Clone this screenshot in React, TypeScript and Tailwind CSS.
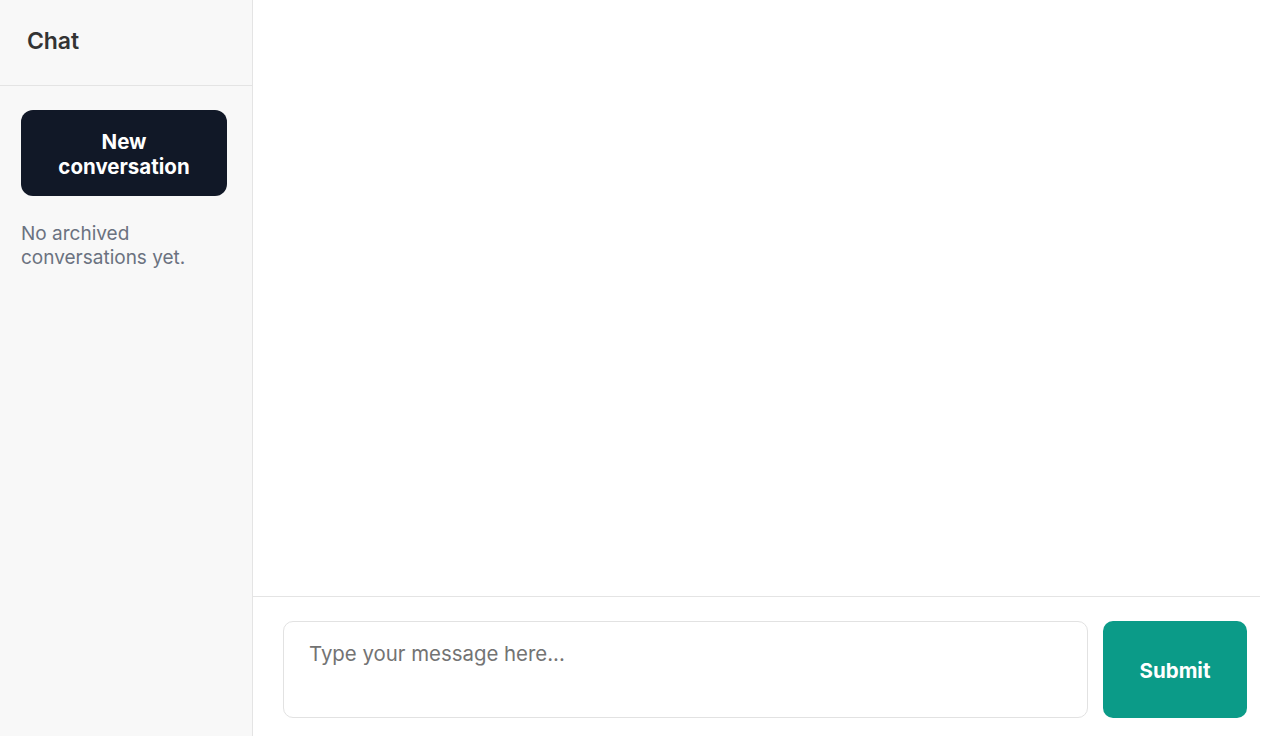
import { useState } from "react";

export default function App() {
  const [message, setMessage] = useState("");

  return (
    <div
      className="flex h-screen w-full bg-white text-[#333]"
      style={{ fontFamily: "Inter, 'Noto Sans', sans-serif" }}
    >
      {/* Sidebar */}
      <aside className="flex w-[253px] shrink-0 flex-col border-r border-[#e4e4e4] bg-[#f8f8f8]">
        <div className="flex h-[86px] items-center border-b border-[#e4e4e4] pb-[2px] px-[27px]">
          <h1 className="text-[23px] font-semibold tracking-[-0.1px] text-[#333]">Chat</h1>
        </div>
        <div className="flex flex-col px-[21px] pt-[24px]">
          <button
            type="button"
            className="flex h-[86px] w-[206px] items-center justify-center rounded-[12px] bg-[#111827] pt-[2px] text-center text-[20.5px] font-bold leading-[25px] text-white"
          >
            New
            <br />
            conversation
          </button>
          <p className="mt-[26px] text-[19px] leading-[24px] text-[#6b7280]">
            No archived conversations yet.
          </p>
        </div>
      </aside>

      {/* Main */}
      <main className="flex min-w-0 flex-1 flex-col pr-[2px]">
        <div className="flex-1" />
        <div className="flex gap-[15px] border-t border-[#e4e4e4] pb-[18px] pl-[30px] pr-[13px] pt-[24px]">
          <textarea
            value={message}
            onChange={(e) => setMessage(e.target.value)}
            placeholder="Type your message here..."
            className="h-[97px] flex-1 resize-none rounded-[10px] border border-[#e2e2e2] px-[25px] pb-[20px] pt-[19px] text-[20.4px] leading-[26px] text-[#333] outline-none placeholder:text-[#737373]"
          />
          <button
            type="button"
            className="h-[97px] w-[144px] rounded-[10px] bg-[#0b9b88] pt-[3px] text-[20.5px] font-bold text-white"
          >
            Submit
          </button>
        </div>
      </main>
    </div>
  );
}
